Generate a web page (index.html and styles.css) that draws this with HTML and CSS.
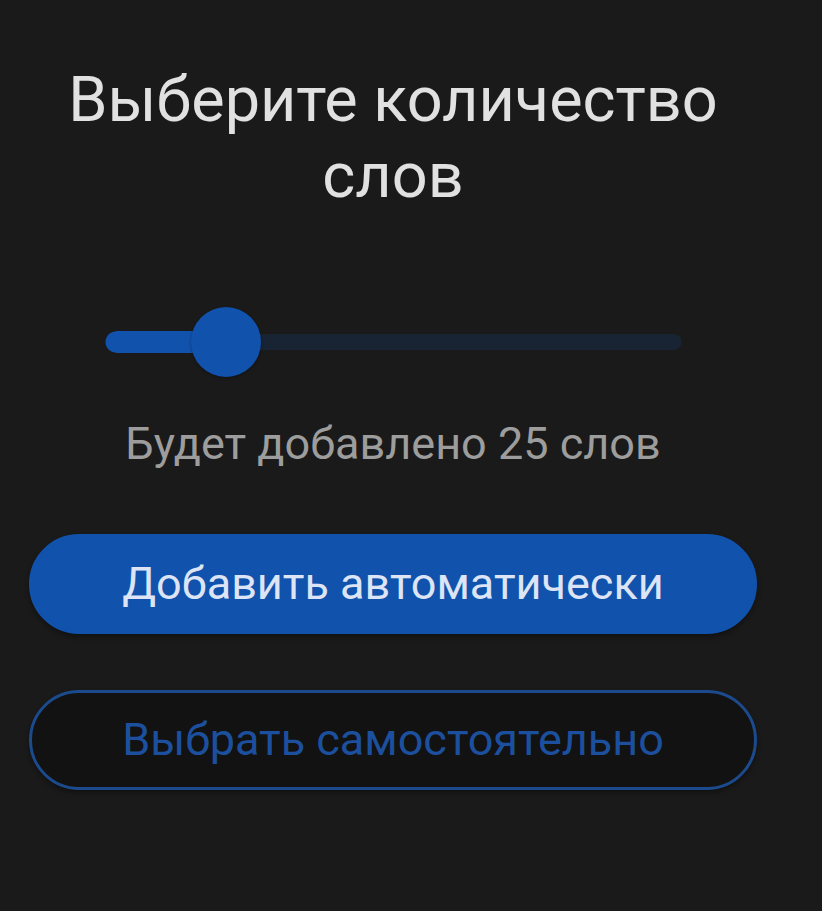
FILE: index.html
```html
<!DOCTYPE html>
<html lang="ru">
<head>
<meta charset="utf-8">
<meta name="viewport" content="width=device-width, initial-scale=1">
<title>Выберите количество слов</title>
<link rel="stylesheet" href="styles.css">
</head>
<body>
<main class="panel">
  <h1 class="title"><label for="count">Выберите количество слов</label></h1>
  <input class="slider" id="count" type="range" min="5" max="122" value="25" style="--ratio: 0.171">
  <output class="summary" for="count">Будет добавлено 25 слов</output>
  <div class="actions">
    <button class="button button-primary" type="button">Добавить автоматически</button>
    <button class="button button-outline" type="button">Выбрать самостоятельно</button>
  </div>
</main>
<script src="script.js"></script>
</body>
</html>
```
FILE: script.js
```js
const slider = document.querySelector(".slider");
const summary = document.querySelector(".summary");

slider.addEventListener("input", () => {
  const ratio = (slider.value - slider.min) / (slider.max - slider.min);
  slider.style.setProperty("--ratio", ratio);
  summary.textContent = `Будет добавлено ${slider.value} слов`;
});
```
FILE: styles.css
```css
* {
  box-sizing: border-box;
}

body {
  margin: 0;
  min-height: 100vh;
  background: #1a1a1a;
  color: #e1e1e1;
  font-family: Roboto, "Noto Sans", sans-serif;
}

.panel {
  display: flex;
  flex-direction: column;
  align-items: center;
  padding: 62px 65px 64px 29px;
}

.title {
  margin: 0;
  font-size: 63px;
  font-weight: 400;
  line-height: 76px;
  text-align: center;
}

.slider {
  appearance: none;
  width: calc(100% - 151px);
  height: 72px;
  margin: 92px 0 0;
  background: transparent;
}

/* Layers: rounded start cap, filled part, rounded end cap, thin rail. */
.slider::-webkit-slider-runnable-track {
  height: 22px;
  background:
    radial-gradient(circle at center, #1152ac 10px, transparent 11px) 0 50% / 22px 22px no-repeat,
    linear-gradient(#1152ac, #1152ac) 11px 50% / calc(24px + (100% - 70px) * var(--ratio)) 22px no-repeat,
    radial-gradient(circle at center, #182434 7px, transparent 8px) 100% 50% / 16px 16px no-repeat,
    linear-gradient(#182434, #182434) 11px 50% / calc(100% - 19px) 16px no-repeat;
}

.slider::-webkit-slider-thumb {
  appearance: none;
  width: 70px;
  height: 70px;
  margin-top: -24px;
  border-radius: 50%;
  background: #1152ac;
  box-shadow: 0 1px 3px #0005;
}

.summary {
  margin-top: 38px;
  color: #9d9d9d;
  font-size: 45px;
  line-height: 56px;
  text-align: center;
}

.actions {
  display: grid;
  gap: 56px;
  width: 100%;
  margin-top: 62px;
}

.button {
  min-height: 100px;
  border: 3px solid #1152ac;
  border-radius: 50px;
  font: 400 45px/52px Roboto, "Noto Sans", sans-serif;
  box-shadow: 0 3px 5px #0005;
}

.button-primary {
  background: #1152ac;
  color: #dce4f5;
}

.button-outline {
  border-color: #1b4b8d;
  background: #121212;
  color: #1c509e;
}
```
